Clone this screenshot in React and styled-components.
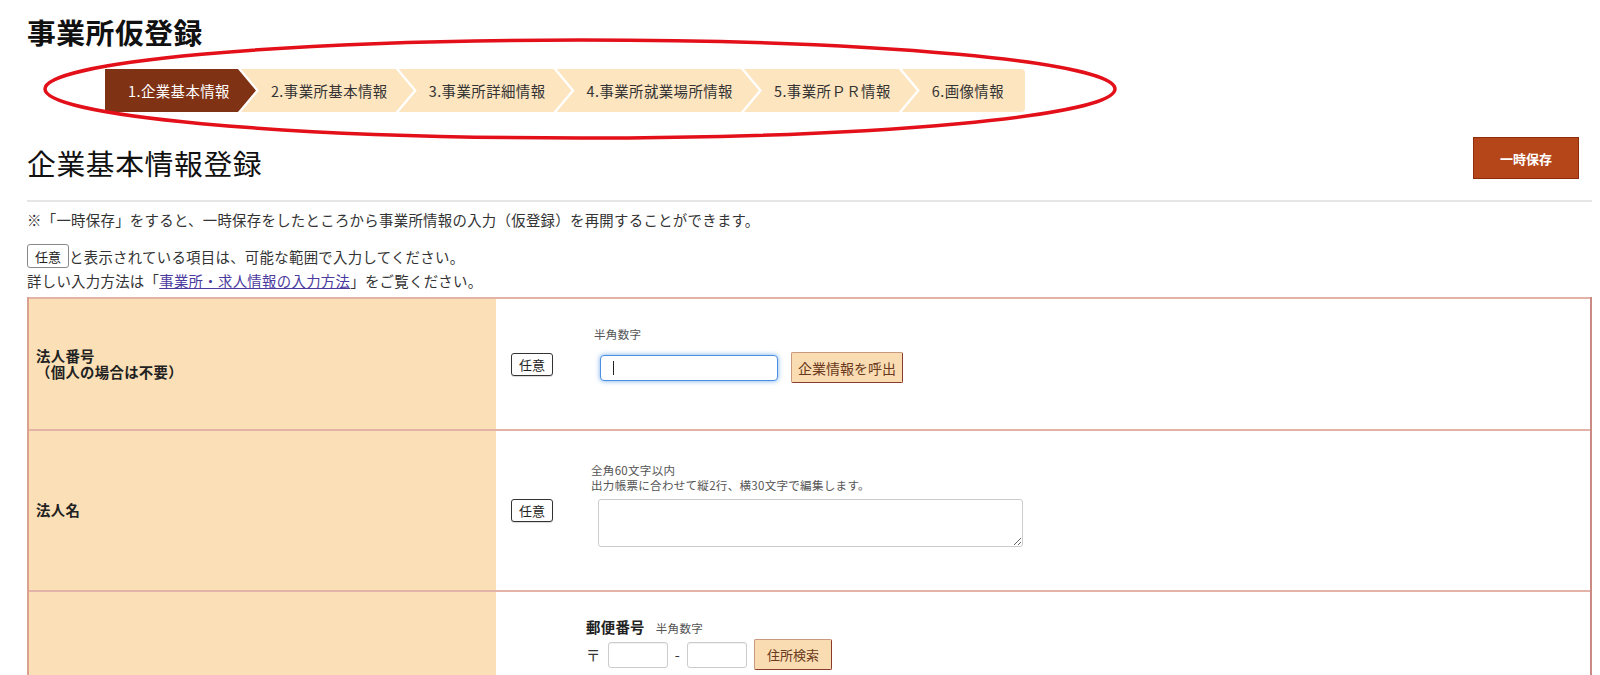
import React from 'react';
import styled, { createGlobalStyle } from 'styled-components';

const GlobalStyle = createGlobalStyle`
  html, body { margin: 0; padding: 0; background: #fff; overflow: hidden; }
  body {
    font-family: "Noto Sans CJK JP", "Noto Sans", sans-serif;
    color: #333;
    font-size: 14.4px;
    letter-spacing: 0.3px;
  }
  * { box-sizing: border-box; }
`;

const Page = styled.div`
  position: relative;
  width: 1600px;
  padding: 12px 8px 0 27px;
`;

const PageTitle = styled.h1`
  margin: 0;
  font-size: 28.8px;
  font-weight: 700;
  line-height: 40px;
  letter-spacing: 0.5px;
  color: #111;
`;

const StepBar = styled.ol`
  list-style: none;
  margin: 17px 0 0 78px;
  padding: 0;
  display: flex;
  height: 43px;
`;

const ARROW = 18;
const clipFor = (first, last) => {
  if (first) return `polygon(0 0, calc(100% - ${ARROW}px) 0, 100% 50%, calc(100% - ${ARROW}px) 100%, 0 100%)`;
  if (last) return `polygon(0 0, 100% 0, 100% 100%, 0 100%, ${ARROW}px 50%)`;
  return `polygon(0 0, calc(100% - ${ARROW}px) 0, 100% 50%, calc(100% - ${ARROW}px) 100%, 0 100%, ${ARROW}px 50%)`;
};

const Step = styled.li`
  display: flex;
  align-items: center;
  height: 43px;
  font-size: 14.4px;
  letter-spacing: 0.45px;
  white-space: nowrap;
  background: ${p => (p.$active ? '#7f3214' : '#fde5c0')};
  color: ${p => (p.$active ? '#fff' : '#333')};
  padding: 0 ${p => (p.$last ? 21 : 26)}px 0 ${p => (p.$first ? 23 : 30)}px;
  margin-left: ${p => (p.$first ? 0 : -15)}px;
  border-radius: ${p => (p.$last ? '0 4px 4px 0' : '0')};
  clip-path: ${p => clipFor(p.$first, p.$last)};
`;

const HeaderRow = styled.div`
  display: flex;
  justify-content: space-between;
  align-items: flex-start;
  margin-top: 25px;
  padding-right: 13px;
`;

const SectionTitle = styled.h2`
  margin: 6px 0 0;
  font-size: 28.8px;
  font-weight: 400;
  line-height: 40px;
  letter-spacing: 0.6px;
  color: #111;
`;

const SaveButton = styled.button`
  width: 106px;
  height: 42px;
  background: #b4461a;
  border: 1px solid #8e2d0d;
  color: #fff;
  font-family: inherit;
  font-weight: 700;
  font-size: 13px;
  cursor: pointer;
`;

const Divider = styled.div`
  height: 2px;
  background: #e6e6e6;
  margin-top: 17px;
`;

const Notice = styled.p`
  margin: 6px 0 0;
  line-height: 24px;
`;

const BadgeLine = styled.p`
  margin: 11px 0 0;
  display: flex;
  align-items: center;
  height: 26px;
`;

const Help = styled.p`
  margin: 0;
  line-height: 24px;
`;

const HelpLink = styled.a`
  color: #4b3a9e;
  text-decoration: underline;
`;

const OptionalBadge = styled.span`
  display: inline-flex;
  align-items: center;
  justify-content: center;
  height: ${p => (p.$inline ? 24 : 23)}px;
  padding: 0 7px;
  border: 1px solid ${p => (p.$inline ? '#888' : '#333')};
  border-radius: 3px;
  background: #fff;
  font-size: 13px;
  letter-spacing: 0;
  color: #222;
  box-shadow: ${p => (p.$inline ? 'none' : '0 1px 1px rgba(0,0,0,0.15)')};
`;

const FormTable = styled.div`
  margin-top: 4px;
  border-left: 2px solid #dba08e;
  border-right: 2px solid #c98a82;
`;

const FormRow = styled.div`
  display: grid;
  grid-template-columns: 467px 1fr;
  height: ${p => p.$h}px;
  border-top: 2px solid #e3b3a8;
`;

const LabelCell = styled.div`
  background: #fadfb7;
  display: flex;
  flex-direction: column;
  justify-content: center;
  padding-left: 7px;
  font-weight: 700;
  font-size: 14.4px;
  line-height: 16.5px;
  color: #222;
`;

const ValueCell = styled.div`
  display: flex;
  align-items: ${p => (p.$top ? 'flex-start' : 'center')};
  padding: ${p => (p.$top ? '25px' : '0')} 0 0 15px;
`;

const BadgeSlot = styled.div`
  width: 75px;
  flex: none;
  display: flex;
`;

const FieldBlock = styled.div`
  display: flex;
  flex-direction: column;
  align-items: flex-start;
  margin-bottom: ${p => p.$mb || 0}px;
`;

const FieldNote = styled.div`
  font-size: 11.52px;
  line-height: ${p => p.$lh || 15}px;
  color: #555;
  margin-left: ${p => p.$indent || 0}px;
`;

const InputRow = styled.div`
  display: flex;
  align-items: center;
  gap: ${p => p.$gap}px;
  margin-top: ${p => p.$mt || 0}px;
  margin-left: ${p => p.$indent || 0}px;
`;

const InputWrap = styled.div`
  position: relative;
  display: flex;
`;

const TextInput = styled.input`
  width: ${p => p.$w}px;
  height: 26px;
  border: 1px solid ${p => (p.$focused ? '#4a90e2' : '#ccc')};
  border-radius: ${p => (p.$focused ? 4 : 3)}px;
  box-shadow: ${p => (p.$focused ? '0 0 5px rgba(74,144,226,0.75)' : 'inset 0 1px 1px rgba(0,0,0,0.06)')};
  padding: 0 12px;
  font: inherit;
  outline: none;
  background: #fff;
`;

const Caret = styled.span`
  position: absolute;
  left: 13px;
  top: 6px;
  width: 1px;
  height: 14px;
  background: #222;
`;

const SubButton = styled.button`
  width: ${p => p.$w}px;
  height: 31px;
  padding: 0;
  background: #fadcb2;
  border: 1px solid #c9997f;
  border-right-color: #8b3b2b;
  border-bottom-color: #8b3b2b;
  border-radius: 2px;
  color: #6a3a20;
  font-family: inherit;
  font-size: ${p => p.$fs}px;
  cursor: pointer;
`;

const TextArea = styled.textarea`
  width: 425px;
  height: 48px;
  margin: 6px 0 0 12px;
  border: 1px solid #ccc;
  border-radius: 3px;
  font: inherit;
  resize: both;
  outline: none;
`;

const PostalLabel = styled.div`
  display: flex;
  align-items: baseline;
  line-height: 20px;
  font-weight: 700;
  font-size: 14.4px;
  color: #222;
`;

const PostalHint = styled.span`
  margin-left: 11px;
  font-weight: 400;
  font-size: 11.52px;
  color: #555;
`;

const PostalMark = styled.span`
  font-size: 14.4px;
  color: #333;
`;

const Annotation = styled.svg`
  position: absolute;
  left: 0;
  top: 0;
  pointer-events: none;
  overflow: visible;
`;

const steps = [
  '1.企業基本情報',
  '2.事業所基本情報',
  '3.事業所詳細情報',
  '4.事業所就業場所情報',
  '5.事業所ＰＲ情報',
  '6.画像情報',
];

export default function App() {
  return (
    <>
      <GlobalStyle />
      <Page>
        <PageTitle>事業所仮登録</PageTitle>
        <StepBar>
          {steps.map((s, i) => (
            <Step key={s} $active={i === 0} $first={i === 0} $last={i === steps.length - 1}>
              {s}
            </Step>
          ))}
        </StepBar>

        <HeaderRow>
          <SectionTitle>企業基本情報登録</SectionTitle>
          <SaveButton type="button">一時保存</SaveButton>
        </HeaderRow>
        <Divider />

        <Notice>※「一時保存」をすると、一時保存をしたところから事業所情報の入力（仮登録）を再開することができます。</Notice>
        <BadgeLine>
          <OptionalBadge $inline>任意</OptionalBadge>と表示されている項目は、可能な範囲で入力してください。
        </BadgeLine>
        <Help>
          詳しい入力方法は「<HelpLink href="#">事業所・求人情報の入力方法</HelpLink>」をご覧ください。
        </Help>

        <FormTable>
          <FormRow $h={132}>
            <LabelCell>
              <span>法人番号</span>
              <span>（個人の場合は不要）</span>
            </LabelCell>
            <ValueCell>
              <BadgeSlot>
                <OptionalBadge>任意</OptionalBadge>
              </BadgeSlot>
              <FieldBlock $mb={19}>
                <FieldNote $indent={8} $lh={16}>半角数字</FieldNote>
                <InputRow $gap={13} $mt={10} $indent={14}>
                  <InputWrap>
                    <TextInput $w={178} $focused />
                    <Caret />
                  </InputWrap>
                  <SubButton type="button" $w={112} $fs={14}>企業情報を呼出</SubButton>
                </InputRow>
              </FieldBlock>
            </ValueCell>
          </FormRow>

          <FormRow $h={161}>
            <LabelCell>法人名</LabelCell>
            <ValueCell>
              <BadgeSlot>
                <OptionalBadge>任意</OptionalBadge>
              </BadgeSlot>
              <FieldBlock $mb={11}>
                <FieldNote $indent={5}>
                  全角60文字以内
                  <br />
                  出力帳票に合わせて縦2行、横30文字で編集します。
                </FieldNote>
                <TextArea />
              </FieldBlock>
            </ValueCell>
          </FormRow>

          <FormRow $h={280}>
            <LabelCell />
            <ValueCell $top>
              <BadgeSlot />
              <FieldBlock>
                <PostalLabel>
                  郵便番号<PostalHint>半角数字</PostalHint>
                </PostalLabel>
                <InputRow $gap={7} $mt={1}>
                  <PostalMark>〒</PostalMark>
                  <TextInput $w={60} />
                  <PostalMark>-</PostalMark>
                  <TextInput $w={60} />
                  <SubButton type="button" $w={78} $fs={13}>住所検索</SubButton>
                </InputRow>
              </FieldBlock>
            </ValueCell>
          </FormRow>
        </FormTable>

        <Annotation width="1600" height="200" aria-hidden="true">
          <ellipse cx="580" cy="89" rx="535" ry="49" fill="none" stroke="#e3101a" strokeWidth="3.5" />
        </Annotation>
      </Page>
    </>
  );
}
